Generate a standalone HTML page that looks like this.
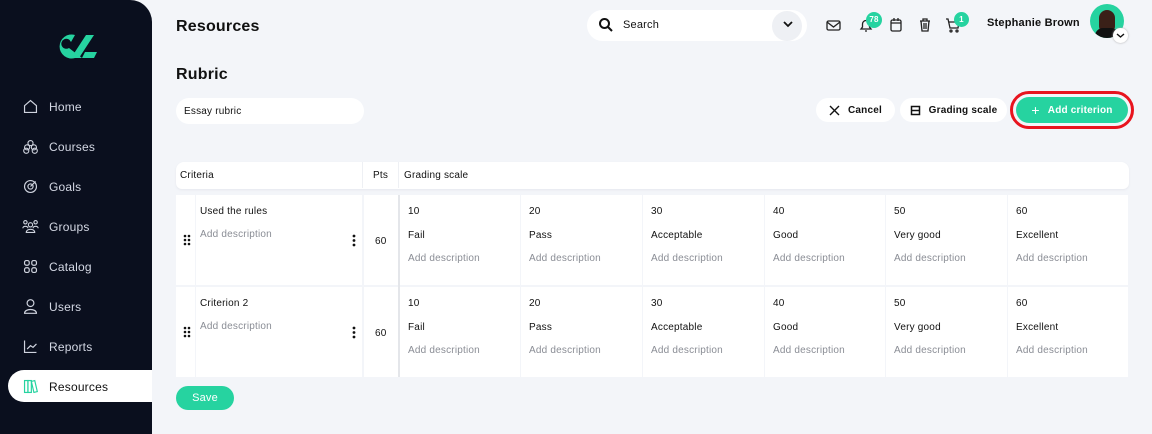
<!DOCTYPE html>
<html><head><meta charset="utf-8"><style>
*{box-sizing:border-box;margin:0;padding:0}
body{width:1152px;height:434px;overflow:hidden;background:#f3f5f9;font-family:"Liberation Sans",sans-serif;color:#111;position:relative;letter-spacing:0.2px}
.abs{position:absolute}
.side{left:0;top:0;width:152px;height:434px;background:#0a0f1e;border-top-right-radius:22px}
.nav{position:absolute;left:22px;font-size:12px;color:#d4d8e4;display:flex;align-items:center;gap:10px}
.nav svg{width:17px;height:17px}
.act{left:8px;top:370px;width:144px;height:32px;background:#fff;border-radius:16px 0 0 16px;position:absolute}
.btn{position:absolute;height:24px;background:#fff;border-radius:12px;font-size:10px;font-weight:bold;display:flex;align-items:center;justify-content:center;gap:8px}
.cell{position:absolute;background:#fff;font-size:10px}
.g{color:#8a8d95}
</style></head><body>
<div class="abs side"></div>
<svg class="abs" style="left:55px;top:33px" width="42" height="27" viewBox="0 0 42 27"><path d="M20 2 A12 12 0 1 0 20 25 L27 25 L14 15 A5 5 0 1 1 16 9 Z" fill="#26d3a0"/><path d="M31 2 L39 2 L24 25 L16 25 Z" fill="#26d3a0"/><path d="M30 19 L42 19 L39 25 L27 25Z" fill="#26d3a0"/></svg>
<div class="nav" style="top:98px"><svg viewBox="0 0 20 20" fill="none" stroke="#cfd3de" stroke-width="1.4"><path d="M3 9 L10 3 L17 9 V17 H3Z"/></svg><span>Home</span></div>
<div class="nav" style="top:138px"><svg viewBox="0 0 20 20" fill="none" stroke="#cfd3de" stroke-width="1.3"><circle cx="10" cy="6" r="3"/><circle cx="6" cy="11" r="3"/><circle cx="14" cy="11" r="3"/><circle cx="5" cy="15" r="3"/><circle cx="15" cy="15" r="3"/></svg>Courses</div>
<div class="nav" style="top:178px"><svg viewBox="0 0 20 20" fill="none" stroke="#cfd3de" stroke-width="1.4"><circle cx="10" cy="10" r="7"/><circle cx="10" cy="10" r="3"/><path d="M10 10 L16 4"/></svg>Goals</div>
<div class="nav" style="top:218px"><svg viewBox="0 0 20 20" fill="none" stroke="#cfd3de" stroke-width="1.3"><circle cx="4" cy="5" r="2"/><circle cx="16" cy="5" r="2"/><circle cx="10" cy="8" r="2.5"/><path d="M1 12c0-3 6-3 6 0M13 12c0-3 6-3 6 0M5 17c0-5 10-5 10 0Z"/></svg>Groups</div>
<div class="nav" style="top:258px"><svg viewBox="0 0 20 20" fill="none" stroke="#cfd3de" stroke-width="1.4"><rect x="3" y="3" width="5.5" height="5.5" rx="2"/><rect x="11.5" y="3" width="5.5" height="5.5" rx="2"/><rect x="3" y="11.5" width="5.5" height="5.5" rx="2"/><rect x="11.5" y="11.5" width="5.5" height="5.5" rx="2"/></svg>Catalog</div>
<div class="nav" style="top:298px"><svg viewBox="0 0 20 20" fill="none" stroke="#cfd3de" stroke-width="1.4"><circle cx="10" cy="6" r="4"/><path d="M3 18c0-6 14-6 14 0Z"/></svg>Users</div>
<div class="nav" style="top:338px"><svg viewBox="0 0 20 20" fill="none" stroke="#cfd3de" stroke-width="1.4"><path d="M3 3V17H17M6 13l4-4 3 2 4-4"/></svg>Reports</div>
<div class="act"></div>
<div class="nav" style="top:378px;color:#111"><svg viewBox="0 0 20 20" fill="none" stroke="#26d3a0" stroke-width="1.4"><rect x="3" y="3" width="4" height="14"/><rect x="7" y="3" width="4" height="14"/><path d="M11 4l4-1 3 13-4 1z"/></svg>Resources</div>

<div class="abs" style="left:176px;top:18px;font-size:16px;font-weight:bold">Resources</div>
<div class="abs" style="left:176px;top:66px;font-size:16px;font-weight:bold">Rubric</div>
<div class="abs" style="left:176px;top:98px;width:188px;height:26px;background:#fff;border-radius:13px;font-size:10px;padding:8px 0 0 8px">Essay rubric</div>

<div class="abs" style="left:587px;top:10px;width:220px;height:31px;background:#fff;border-radius:16px"></div>
<svg class="abs" style="left:598px;top:17px" width="16" height="16" viewBox="0 0 16 16" fill="none" stroke="#111" stroke-width="2"><circle cx="6.5" cy="6.5" r="4.5"/><path d="M10 10l4 4"/></svg>
<div class="abs" style="left:623px;top:19px;font-size:11px">Search</div>
<div class="abs" style="left:772px;top:11px;width:30px;height:30px;border-radius:15px;background:#eef0f4"></div>
<svg class="abs" style="left:782px;top:19px" width="12" height="10" viewBox="0 0 12 10" fill="none" stroke="#111" stroke-width="1.8"><path d="M2 3l4 4 4-4"/></svg>
<svg class="abs" style="left:826px;top:19px" width="15" height="13" viewBox="0 0 15 13" fill="none" stroke="#222" stroke-width="1.3"><rect x="1" y="2" width="13" height="9" rx="1.5"/><path d="M1 3l6.5 5 6.5-5"/></svg>
<svg class="abs" style="left:858px;top:17px" width="16" height="16" viewBox="0 0 16 16" fill="none" stroke="#222" stroke-width="1.3"><path d="M3 12h10l-1.5-2V7a3.5 3.5 0 0 0-7 0v3z M7 14h2"/></svg>
<div class="abs" style="left:866px;top:12px;width:16px;height:16px;border-radius:8px;background:#26d3a0;color:#fff;font-size:8px;font-weight:bold;text-align:center;line-height:16px">78</div>
<svg class="abs" style="left:889px;top:17px" width="14" height="16" viewBox="0 0 14 16" fill="none" stroke="#222" stroke-width="1.3"><rect x="2" y="3" width="10" height="11" rx="1.5"/><path d="M2 6h10M5 1v3M9 1v3"/></svg>
<svg class="abs" style="left:918px;top:17px" width="14" height="16" viewBox="0 0 14 16" fill="none" stroke="#222" stroke-width="1.3"><path d="M2 4h10M5 4V2h4v2M3 4l1 10h6l1-10M6 6v6M8 6v6"/></svg>
<svg class="abs" style="left:945px;top:17px" width="16" height="16" viewBox="0 0 16 16" fill="none" stroke="#222" stroke-width="1.3"><path d="M1 2h2l2 9h8l1-6H4"/><circle cx="6" cy="14" r="1"/><circle cx="12" cy="14" r="1"/></svg>
<div class="abs" style="left:954px;top:12px;width:15px;height:15px;border-radius:8px;background:#26d3a0;color:#fff;font-size:8px;font-weight:bold;text-align:center;line-height:15px">1</div>
<div class="abs" style="left:987px;top:17px;font-size:11px;font-weight:bold">Stephanie Brown</div>
<div class="abs" style="left:1090px;top:4px;width:34px;height:34px;border-radius:17px;background:#26d3a0;overflow:hidden"><div style="position:absolute;left:9px;top:6px;width:16px;height:24px;border-radius:8px;background:#3a2018"></div><div style="position:absolute;left:5px;top:24px;width:24px;height:14px;border-radius:8px 8px 0 0;background:#111"></div></div>
<div class="abs" style="left:1113px;top:28px;width:15px;height:15px;border-radius:8px;background:#fff;box-shadow:0 0 2px #aaa"></div>
<svg class="abs" style="left:1116px;top:32px" width="9" height="7" viewBox="0 0 9 7" fill="none" stroke="#111" stroke-width="1.4"><path d="M1 2l3.5 3 3.5-3"/></svg>

<div class="btn" style="left:816px;top:98px;width:79px"><svg width="11" height="11" viewBox="0 0 11 11" stroke="#111" stroke-width="1.4"><path d="M1 1l9 9M10 1l-9 9"/></svg>Cancel</div>
<div class="btn" style="left:900px;top:98px;width:107px"><svg width="11" height="11" viewBox="0 0 11 11" fill="none" stroke="#111" stroke-width="1.5"><rect x="1.5" y="1.5" width="8" height="8"/><path d="M1.5 5.5h8"/></svg>Grading scale</div>
<div class="abs" style="left:1010px;top:91px;width:124px;height:38px;border:3.5px solid #e8141e;border-radius:19px"></div>
<div class="btn" style="left:1016px;top:97px;width:112px;height:26px;background:#26d3a0;color:#fff;border-radius:13px"><span style="font-size:14px;font-weight:normal">+</span>Add criterion</div>

<div class="abs" style="left:176px;top:162px;width:953px;height:27px;background:#fff;border-radius:8px 8px 6px 6px;box-shadow:0 1px 2px #e6e8ee"></div>
<div class="abs" style="left:362px;top:162px;width:1px;height:26px;background:#eef0f4"></div>
<div class="abs" style="left:398px;top:162px;width:1px;height:26px;background:#eef0f4"></div>
<div class="abs" style="left:180px;top:170px;font-size:10px">Criteria</div>
<div class="abs" style="left:373px;top:170px;font-size:10px">Pts</div>
<div class="abs" style="left:404px;top:170px;font-size:10px">Grading scale</div>

<div id="rows"></div>
<script>
var h='';var ys=[195,287];var names=['Used the rules','Criterion 2'];
var vals=[['10','Fail'],['20','Pass'],['30','Acceptable'],['40','Good'],['50','Very good'],['60','Excellent']];
var xs=[400,521,643,765,886,1008];
for(var r=0;r<2;r++){var y=ys[r];
h+='<div class="cell" style="left:176px;top:'+y+'px;width:19px;height:90px"></div>';
h+='<svg class="abs" style="left:183px;top:'+(y+39)+'px" width="8" height="12"><g fill="#111"><circle cx="2" cy="2" r="1.3"/><circle cx="6" cy="2" r="1.3"/><circle cx="2" cy="6" r="1.3"/><circle cx="6" cy="6" r="1.3"/><circle cx="2" cy="10" r="1.3"/><circle cx="6" cy="10" r="1.3"/></g></svg>';
h+='<div class="cell" style="left:196px;top:'+y+'px;width:166px;height:90px"><div style="position:absolute;left:4px;top:11px">'+names[r]+'</div><div class="g" style="position:absolute;left:4px;top:34px">Add description</div></div>';
h+='<svg class="abs" style="left:352px;top:'+(y+39)+'px" width="4" height="13"><g fill="#111"><circle cx="2" cy="2" r="1.4"/><circle cx="2" cy="6.5" r="1.4"/><circle cx="2" cy="11" r="1.4"/></g></svg>';
h+='<div class="cell" style="left:364px;top:'+y+'px;width:34px;height:90px"><div style="position:absolute;left:11px;top:41px">60</div></div>';
for(var c=0;c<6;c++){var w=(c<5?xs[c+1]:1129)-xs[c]-1;
h+='<div class="cell" style="left:'+xs[c]+'px;top:'+y+'px;width:'+w+'px;height:90px"><div style="position:absolute;left:8px;top:11px">'+vals[c][0]+'</div><div style="position:absolute;left:8px;top:35px">'+vals[c][1]+'</div><div class="g" style="position:absolute;left:8px;top:58px">Add description</div></div>';}
}
h+='<div class="abs" style="left:398px;top:195px;width:2px;height:182px;background:#e4e6ea"></div>';
document.getElementById('rows').innerHTML=h;
</script>
<div class="btn" style="left:176px;top:386px;width:58px;height:24px;background:#26d3a0;color:#fff;font-weight:normal;font-size:11px">Save</div>
</body></html>
